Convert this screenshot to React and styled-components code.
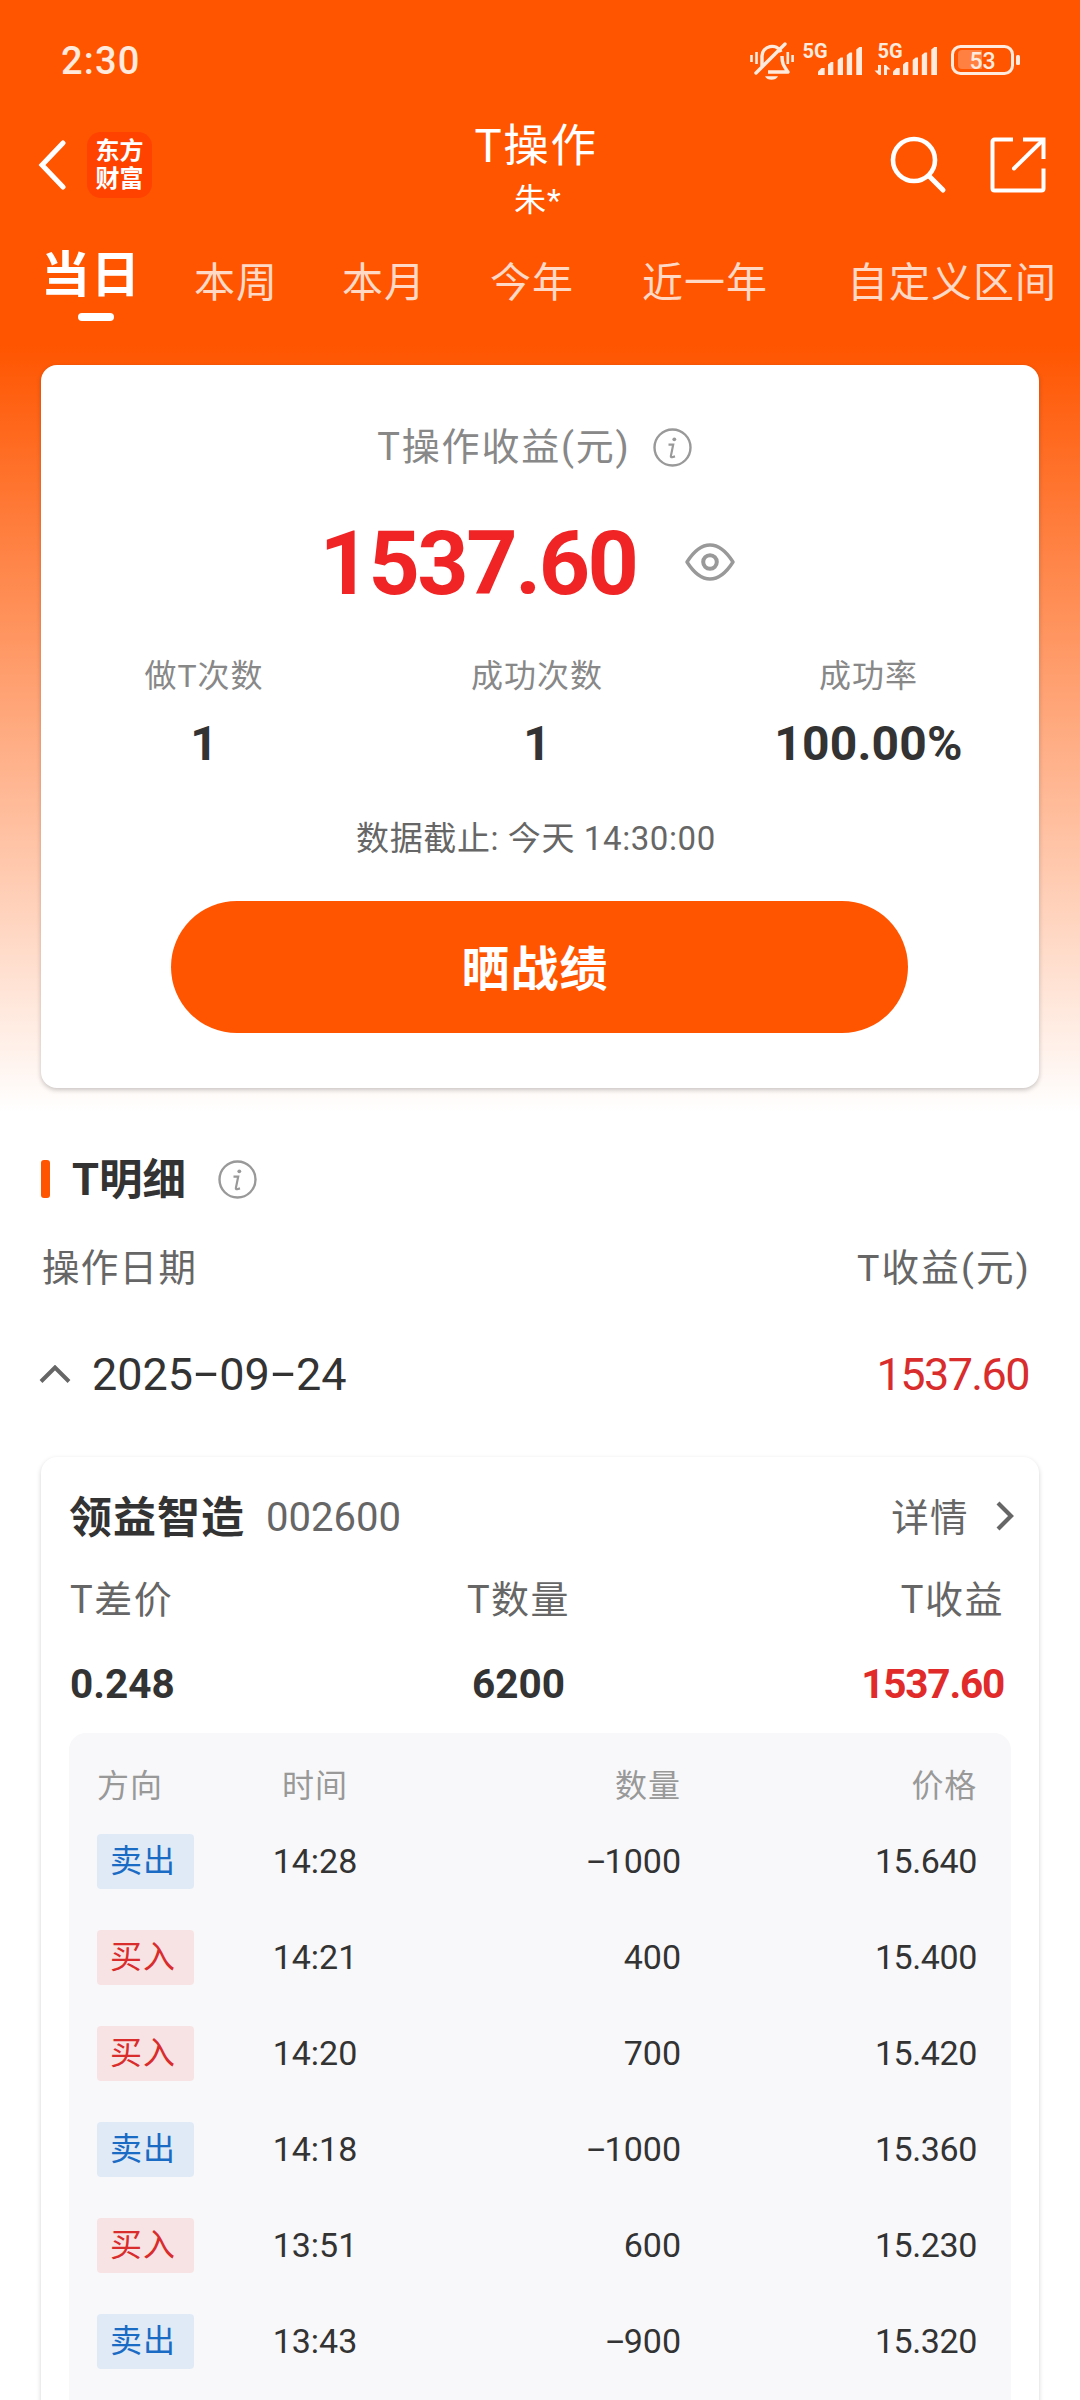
import React from "react";
import styled, { createGlobalStyle } from "styled-components";

const GlobalStyle = createGlobalStyle`
  body {
    margin: 0;
    background: #fff;
    font-family: Roboto, "Noto Sans CJK SC", sans-serif;
    color: #333;
  }
`;

const Page = styled.div`
  width: 1080px;
  height: 2400px;
  overflow: hidden;
  background: linear-gradient(
    to bottom,
    #ff5500 0,
    #ff5500 345px,
    #ffffff 1112px
  );
`;

const StatusBar = styled.div`
  height: 121px;
  padding: 0 57px 0 61px;
  display: flex;
  align-items: center;
  justify-content: space-between;
  color: #ffeadd;
`;

const Clock = styled.span`
  font-size: 38px;
  font-weight: 500;
  line-height: 50px;
  letter-spacing: 1.2px;
`;

const StatusIcons = styled.div`
  display: flex;
  align-items: center;
  svg {
    display: block;
  }
`;

const Header = styled.header`
  height: 106px;
  padding: 0 34px 0 38px;
  display: grid;
  grid-template-columns: 1fr auto 1fr;
`;

const HeaderSide = styled.div`
  height: 87px;
  display: flex;
  align-items: center;
  justify-content: ${({ $end }) => ($end ? "flex-end" : "flex-start")};
  gap: ${({ $end }) => ($end ? "43px" : "20px")};
`;

const Logo = styled.div`
  width: 65px;
  height: 66px;
  border-radius: 14px;
  background: #ff4200;
  color: #fff;
  display: flex;
  flex-direction: column;
  align-items: center;
  justify-content: center;
  font-size: 24px;
  font-weight: 700;
  line-height: 28px;
`;

const TitleBlock = styled.div`
  padding-right: 10px;
  color: #fff;
  text-align: center;
`;

const Title = styled.div`
  margin-right: 2px;
  font-size: 45.5px;
  line-height: 52px;
  letter-spacing: 1.7px;
`;

const SubTitle = styled.div`
  padding-left: 2px;
  font-size: 32px;
  line-height: 54px;
  letter-spacing: 1px;
`;

const Tabs = styled.nav`
  height: 138px;
  padding-left: 41px;
  display: flex;
  align-items: flex-start;
`;

const Tab = styled.div`
  flex: none;
  margin-left: ${({ $gap }) => $gap}px;
  padding-top: ${({ $active }) => ($active ? 21 : 28)}px;
  color: ${({ $active }) => ($active ? "#fff" : "#ffd9c6")};
  font-size: ${({ $active }) => ($active ? 49 : 41)}px;
  font-weight: ${({ $active }) => ($active ? 700 : 400)};
  line-height: 56px;
  letter-spacing: 1px;
  display: flex;
  flex-direction: column;
  align-items: center;
`;

const TabLine = styled.i`
  width: 36px;
  height: 8px;
  margin: 9px 0 0 9px;
  border-radius: 4px;
  background: #fff;
`;

const Card = styled.section`
  margin: 0 41px;
  border-radius: 16px;
  background: #fff;
  box-shadow: 0 2px 5px rgba(0, 0, 0, 0.22);
`;

const SummaryCard = styled(Card)`
  height: 723px;
  padding-top: 54px;
  box-sizing: border-box;
  display: flex;
  flex-direction: column;
  align-items: center;
`;

const SummaryTitle = styled.div`
  height: 56px;
  margin-right: 11px;
  display: flex;
  align-items: center;
  gap: 22px;
  color: #888;
  font-size: 38px;
  line-height: 56px;
  letter-spacing: 1.8px;
`;

const Profit = styled.div`
  height: 100px;
  margin: 39px 25px 0 0;
  display: flex;
  align-items: center;
  gap: 49px;
  color: #f02424;
  font-size: 89.6px;
  font-weight: 700;
  line-height: 100px;
  letter-spacing: -2.5px;
  svg {
    margin-top: -4px;
  }
`;

const Stats = styled.div`
  align-self: stretch;
  margin-top: 40px;
  display: grid;
  grid-template-columns: 326px 340px 323px;
  text-align: center;
`;

const StatLabel = styled.div`
  color: #888;
  font-size: 32px;
  line-height: 44px;
  letter-spacing: 1px;
`;

const StatValue = styled.div`
  margin-top: 16px;
  font-size: 48px;
  font-weight: 700;
  line-height: 60px;
  letter-spacing: 0.2px;
`;

const Deadline = styled.div`
  margin: 43px 8px 0 0;
  color: #666;
  font-size: 33px;
  line-height: 44px;
  letter-spacing: 0.6px;
`;

const ShareButton = styled.button`
  width: 737px;
  height: 132px;
  margin: 40px 2px 0 0;
  padding: 0 8px 4px 0;
  border: 0;
  border-radius: 66px;
  background: #ff5500;
  color: #fff;
  font-family: inherit;
  font-size: 48px;
  font-weight: 700;
  letter-spacing: 1px;
`;

const SectionHead = styled.div`
  height: 54px;
  margin: 65px 41px 0;
  display: flex;
  align-items: center;
  svg {
    margin-top: -2px;
  }
`;

const SectionBar = styled.i`
  width: 9px;
  height: 38px;
  margin-top: -2px;
  border-radius: 3px;
  background: #ff5500;
`;

const SectionTitle = styled.h2`
  margin: 2px 32px 0 22px;
  font-size: 43.5px;
  font-weight: 700;
  line-height: 54px;
`;

const ListHead = styled.div`
  margin: 36px 49px 0 42px;
  display: flex;
  justify-content: space-between;
  color: #666;
  font-size: 37.5px;
  line-height: 50px;
  letter-spacing: 1.3px;
  span:last-child {
    letter-spacing: 2.2px;
  }
`;

const DateRow = styled.div`
  height: 60px;
  margin: 52px 51px 0 39px;
  display: flex;
  align-items: center;
  font-size: 45px;
  line-height: 60px;
`;

const DateText = styled.span`
  margin-left: 21px;
`;

const DateProfit = styled.span`
  margin-left: auto;
  color: #d92c2c;
  letter-spacing: -1.6px;
`;

const StockCard = styled(Card)`
  margin-top: 52px;
  padding: 36px 28px 0;
  box-shadow: 0 2px 5px rgba(0, 0, 0, 0.18);
`;

const StockHead = styled.div`
  height: 50px;
  display: flex;
  align-items: center;
  color: #666;
  line-height: 50px;
`;

const StockName = styled.span`
  font-size: 43px;
  font-weight: 700;
  letter-spacing: 1px;
  color: #333;
`;

const StockCode = styled.span`
  margin-left: 21px;
  font-size: 40px;
`;

const DetailLink = styled.span`
  margin-left: auto;
  margin-right: -3px;
  display: flex;
  align-items: center;
  gap: 27px;
  font-size: 37.5px;
  letter-spacing: 1.4px;
  svg {
    margin-top: -5px;
  }
`;

const Figures = styled.div`
  margin: 32px 7px 0 1px;
  display: grid;
  grid-template-columns: 301px 295px 1fr;
  > div:nth-child(2) {
    text-align: center;
  }
  > div:nth-child(3) {
    text-align: right;
  }
`;

const FigureLabel = styled.div`
  color: #666;
  font-size: 38px;
  line-height: 50px;
  letter-spacing: 1.5px;
`;

const FigureValue = styled.div`
  margin-top: 34px;
  color: ${({ $red }) => ($red ? "#e12a2a" : "#333")};
  font-size: 40.5px;
  font-weight: 700;
  line-height: 50px;
  letter-spacing: ${({ $red }) => ($red ? -1.2 : 0)}px;
`;

const Trades = styled.div`
  margin-top: 24px;
  padding: 31px 34px 60px 28px;
  border-radius: 17px;
  background: #f8f8fa;
`;

const TradeRow = styled.div`
  height: 96px;
  display: grid;
  grid-template-columns: 140px 156px 288px 1fr;
  align-items: center;
  font-size: 34px;
  > span:nth-child(2) {
    text-align: center;
  }
  > span:nth-child(3),
  > span:nth-child(4) {
    text-align: right;
  }
  > span:nth-child(4) {
    letter-spacing: -0.4px;
  }
`;

const TradeHead = styled(TradeRow)`
  height: 44px;
  margin-bottom: 5px;
  color: #999;
  font-size: 32px;
  line-height: 44px;
  letter-spacing: 1px;
  > span:nth-child(4) {
    letter-spacing: 0.8px;
  }
`;

const Side = styled.span`
  width: 97px;
  height: 55px;
  padding-left: 13px;
  box-sizing: border-box;
  border-radius: 4px;
  font-size: 32px;
  line-height: 55px;
  letter-spacing: 1px;
  color: ${({ $sell }) => ($sell ? "#1a6bc4" : "#d92c2c")};
  background: ${({ $sell }) => ($sell ? "#dfeaf6" : "#f8e3e4")};
`;

// the hyphen is stretched to the width of a digit
const Dash = styled.i`
  display: inline-block;
  width: 0.58em;
  font-style: normal;
  text-align: center;
  transform: translateY(-0.04em) scaleX(1.9);
`;

const AmountDash = styled(Dash)`
  width: 0.48em;
`;

const withDashes = (text, Mark) =>
  text.split("-").map((part, i) => (
    <React.Fragment key={i}>
      {i > 0 && <Mark>-</Mark>}
      {part}
    </React.Fragment>
  ));

const Signals = () => (
  <svg width="275" height="44" viewBox="748 39 275 44" fill="#ffeadd">
    <g fill="none" stroke="#ffeadd" strokeWidth="3.4">
      <path d="M762 66V56a10 10 0 0 1 19-4" />
      <path d="M782 56c0 7 1 9 6 16H768" strokeLinejoin="round" />
      <path d="M756 73L785 44" strokeLinecap="round" />
      <path d="M751.5 55v7M756.5 52v12M787.8 52v12M792.6 55v7" strokeWidth="2.6" />
    </g>
    <path d="M765 76.200h13c-2 4.800-11 4.800-13 0z" />
    {[0, 75].map(x => (
      <g key={x} transform={`translate(${x} 0)`}>
        <text x="802.500" y="57.500" fontSize="20" fontWeight="700">
          5G
        </text>
        <path d="M818 75v-3.500l3.500-3.500h3.200v7z" />
        <path d="M828 75V64.500l3-2.500h2.300v13z" />
        <path d="M837.700 75V60l3-2.500h2.300V75z" />
        <path d="M846.800 75V55l3-2.500h2.300V75z" />
        <path d="M856.300 75V49.500l3-2.500h2.700v28z" />
      </g>
    ))}
    <path d="M874.500 70.500h3.500V65h3v10h-2zM884 65h2l4.500 4.500H887V75h-3z" />
    <rect x="952.500" y="46.500" width="60" height="27" rx="8" fill="none" stroke="#ffeadd" strokeWidth="3" />
    <path d="M962 50h20v19h-20a4 4 0 0 1-4-4V54a4 4 0 0 1 4-4z" fill="#ff8040" />
    <rect x="1016" y="55" width="4" height="10" rx="1.500" />
    <text x="969.500" y="68.500" fontSize="23" fontWeight="500">
      53
    </text>
  </svg>
);

const BackIcon = () => (
  <svg width="29" height="50" viewBox="0 0 29 50" fill="none">
    <path d="M25 3L4 25L25 47" stroke="#fff" strokeWidth="5" strokeLinecap="round" />
  </svg>
);

const SearchIcon = () => (
  <svg width="58" height="58" viewBox="0 0 58 58" fill="none" stroke="#fff">
    <circle cx="25" cy="24" r="21" strokeWidth="4.600" />
    <path d="M40 40L54 54" strokeWidth="5" strokeLinecap="round" />
  </svg>
);

const ExportIcon = () => (
  <svg width="56" height="56" viewBox="0 0 56 56" fill="none" stroke="#fff">
    <g strokeWidth="4">
      <path d="M23 2.500H4.500a2 2 0 0 0-2 2v47a2 2 0 0 0 2 2h47a2 2 0 0 0 2-2V31.500" />
      <path d="M33 2.500H53.500V22" />
      <path d="M24 31.500L52 4" strokeLinecap="round" />
    </g>
  </svg>
);

const InfoIcon = () => (
  <svg width="39" height="39" viewBox="0 0 39 39">
    <circle cx="19.500" cy="19.500" r="18" fill="none" stroke="#999" strokeWidth="2.400" />
    <circle cx="21.300" cy="11.300" r="1.900" fill="#999" />
    <path
      d="M15.500 16.700h4.700l-2.300 11.200q-.3 1.500 1.300 1.300l2.800-.8"
      fill="none"
      stroke="#999"
      strokeWidth="2.200"
    />
  </svg>
);

const EyeIcon = () => (
  <svg width="50" height="38" viewBox="0 0 50 38" fill="none" stroke="#999">
    <path
      d="M2 19C9 8 16 2 25 2s16 6 23 17C41 30 34 36 25 36S9 30 2 19z"
      strokeWidth="3.400"
      strokeLinejoin="round"
    />
    <circle cx="25" cy="19" r="6.800" strokeWidth="4" />
  </svg>
);

const ChevronUp = () => (
  <svg width="32" height="20" viewBox="0 0 32 20" fill="none">
    <path d="M2 16.500L16 2.500L30 16.500" stroke="#666" strokeWidth="4" />
  </svg>
);

const ChevronRight = () => (
  <svg width="18" height="30" viewBox="0 0 18 30" fill="none">
    <path d="M2 2L15 15L2 28" stroke="#666" strokeWidth="4.200" />
  </svg>
);

const tabs = [
  { label: "当日", gap: 0, active: true },
  { label: "本周", gap: 53 },
  { label: "本月", gap: 64 },
  { label: "今年", gap: 64 },
  { label: "近一年", gap: 68 },
  { label: "自定义区间", gap: 79 }
];

const stats = [
  { label: "做T次数", value: "1" },
  { label: "成功次数", value: "1" },
  { label: "成功率", value: "100.00%" }
];

const figures = [
  { label: "T差价", value: "0.248" },
  { label: "T数量", value: "6200" },
  { label: "T收益", value: "1537.60", red: true }
];

const trades = [
  { side: "卖出", time: "14:28", amount: "-1000", price: "15.640" },
  { side: "买入", time: "14:21", amount: "400", price: "15.400" },
  { side: "买入", time: "14:20", amount: "700", price: "15.420" },
  { side: "卖出", time: "14:18", amount: "-1000", price: "15.360" },
  { side: "买入", time: "13:51", amount: "600", price: "15.230" },
  { side: "卖出", time: "13:43", amount: "-900", price: "15.320" }
];

export default () => {
  return (
    <>
      <GlobalStyle />
      <Page>
        <StatusBar>
          <Clock>2:30</Clock>
          <StatusIcons>
            <Signals />
          </StatusIcons>
        </StatusBar>
        <Header>
          <HeaderSide>
            <BackIcon />
            <Logo>
              <span>东方</span>
              <span>财富</span>
            </Logo>
          </HeaderSide>
          <TitleBlock>
            <Title>T操作</Title>
            <SubTitle>朱*</SubTitle>
          </TitleBlock>
          <HeaderSide $end>
            <SearchIcon />
            <ExportIcon />
          </HeaderSide>
        </Header>
        <Tabs>
          {tabs.map(({ label, gap, active }) => (
            <Tab key={label} $gap={gap} $active={active}>
              {label}
              {active && <TabLine />}
            </Tab>
          ))}
        </Tabs>
        <SummaryCard>
          <SummaryTitle>
            T操作收益(元)
            <InfoIcon />
          </SummaryTitle>
          <Profit>
            1537.60
            <EyeIcon />
          </Profit>
          <Stats>
            {stats.map(({ label, value }) => (
              <div key={label}>
                <StatLabel>{label}</StatLabel>
                <StatValue>{value}</StatValue>
              </div>
            ))}
          </Stats>
          <Deadline>数据截止: 今天 14:30:00</Deadline>
          <ShareButton>晒战绩</ShareButton>
        </SummaryCard>
        <SectionHead>
          <SectionBar />
          <SectionTitle>T明细</SectionTitle>
          <InfoIcon />
        </SectionHead>
        <ListHead>
          <span>操作日期</span>
          <span>T收益(元)</span>
        </ListHead>
        <DateRow>
          <ChevronUp />
          <DateText>{withDashes("2025-09-24", Dash)}</DateText>
          <DateProfit>1537.60</DateProfit>
        </DateRow>
        <StockCard>
          <StockHead>
            <StockName>领益智造</StockName>
            <StockCode>002600</StockCode>
            <DetailLink>
              详情
              <ChevronRight />
            </DetailLink>
          </StockHead>
          <Figures>
            {figures.map(({ label, value, red }) => (
              <div key={label}>
                <FigureLabel>{label}</FigureLabel>
                <FigureValue $red={red}>{value}</FigureValue>
              </div>
            ))}
          </Figures>
          <Trades>
            <TradeHead>
              <span>方向</span>
              <span>时间</span>
              <span>数量</span>
              <span>价格</span>
            </TradeHead>
            {trades.map(({ side, time, amount, price }) => (
              <TradeRow key={time}>
                <Side $sell={side === "卖出"}>{side}</Side>
                <span>{time}</span>
                <span>{withDashes(amount, AmountDash)}</span>
                <span>{price}</span>
              </TradeRow>
            ))}
          </Trades>
        </StockCard>
      </Page>
    </>
  );
};
